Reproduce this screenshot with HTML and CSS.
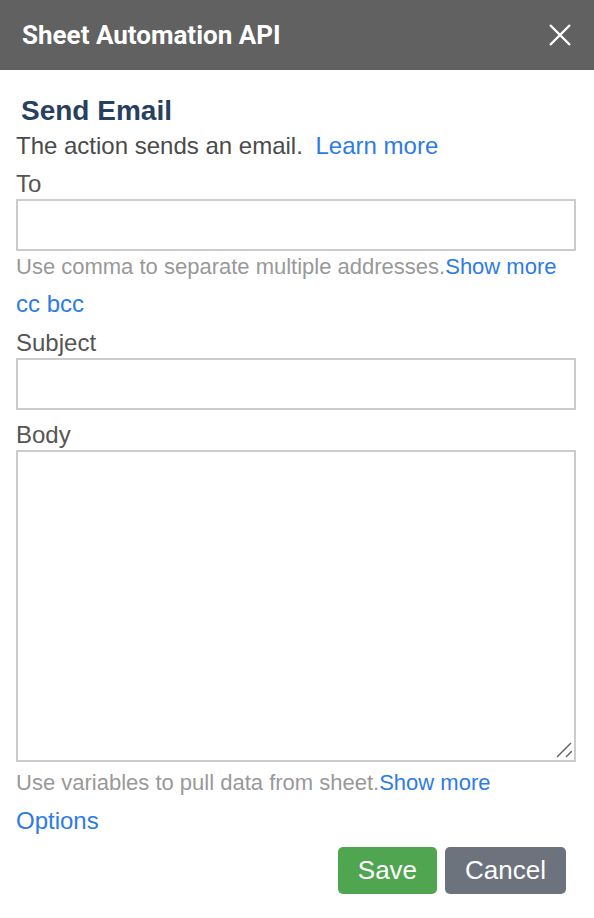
FILE: index.html
```html
<!DOCTYPE html>
<html lang="en">
  <head>
    <meta charset="UTF-8" />
    <meta name="viewport" content="width=device-width, initial-scale=1.0" />
    <title>Sheet Automation API</title>
    <link rel="stylesheet" href="styles.css">
  </head>

  <body>
    <header class="topbar">
      <h1>Sheet Automation API</h1>
      <button class="luk" aria-label="Close">
        <svg width="24" height="24" viewBox="0 0 24 24">
          <path d="M2 2 L22 22 M22 2 L2 22" stroke="#fff" stroke-width="2.4" fill="none" />
        </svg>
      </button>
    </header>

    <main class="form">
      <h2>Send Email</h2>
      <p class="intro">The action sends an email. <a href="#">Learn more</a></p>

      <label for="to" class="first">To</label>
      <input id="to" type="text" />
      <p class="hint">Use comma to separate multiple addresses.<a href="#">Show more</a></p>
      <p class="cc"><a href="#">cc</a> <a href="#">bcc</a></p>

      <label for="subject">Subject</label>
      <input id="subject" type="text" />

      <label for="body" class="body-label">Body</label>
      <div class="tekstfelt">
        <textarea id="body"></textarea>
        <svg class="greb" width="16" height="16" viewBox="0 0 16 16">
          <path d="M1 15 L15 1 M10 15 L16 9" stroke="#666" stroke-width="1.5" fill="none" />
        </svg>
      </div>
      <p class="hint body-hint">Use variables to pull data from sheet.<a href="#">Show more</a></p>
      <p class="options"><a href="#">Options</a></p>

      <div class="knapper">
        <button class="gem">Save</button>
        <button class="annuller">Cancel</button>
      </div>
    </main>
  </body>
</html>
```

FILE: styles.css
```css
body {
  margin: 0;
  font-family: "Liberation Sans", Arial, sans-serif;
  color: #555;
  background: #fff;
}

a {
  color: #2d7be5;
  text-decoration: none;
}

.topbar {
  height: 70px;
  background-color: #616161;
  display: flex;
  align-items: center;
  justify-content: space-between;
  padding: 0 22px 0 22px;
}

.topbar h1 {
  margin: 0;
  font-family: Roboto, sans-serif;
  font-weight: 700;
  font-size: 26px;
  color: #fff;
}

.luk {
  background: none;
  border: 0;
  padding: 0;
  width: 24px;
  height: 24px;
  cursor: pointer;
}

.form {
  padding: 21px 18px 0 16px;
  display: flex;
  flex-direction: column;
}

.form h2 {
  margin: 0 0 0 5px;
  font-size: 28px;
  color: #283f60;
  line-height: 40px;
}

.intro {
  margin: 0;
  font-size: 24px;
  line-height: 30px;
  color: #4a4a4a;
}

.intro a {
  margin-left: 6px;
}

label {
  font-size: 24px;
  line-height: 30px;
  margin-top: 9px;
}

label.first {
  margin-top: 8px;
}

label.body-label {
  margin-top: 10px;
}

input,
textarea {
  border: 2px solid #ccc;
  font-size: 18px;
  box-sizing: border-box;
  margin: 0;
  height: 52px;
}

.tekstfelt {
  position: relative;
  height: 312px;
}

textarea {
  display: block;
  width: 100%;
  height: 312px;
  resize: none;
}

.greb {
  position: absolute;
  right: 4px;
  bottom: 4px;
}

.hint {
  margin: 1px 0 0;
  font-size: 22px;
  line-height: 30px;
  color: #999;
}

.body-hint {
  margin-top: 6px;
}

.cc {
  margin: 7px 0 0;
  font-size: 24px;
  line-height: 30px;
}

.options {
  margin: 8px 0 0;
  font-size: 24px;
  line-height: 30px;
}

.knapper {
  display: flex;
  justify-content: flex-end;
  gap: 8px;
  margin-top: 11px;
  padding-right: 10px;
}

.knapper button {
  font-family: "Liberation Sans", Arial, sans-serif;
  font-size: 26px;
  color: #fff;
  border: 0;
  border-radius: 5px;
  height: 47px;
  padding: 0 20px;
  cursor: pointer;
}

.gem {
  background-color: #50a550;
  padding: 0 19px;
}

.annuller {
  background-color: #6c737c;
  padding: 0 22px;
}
```
